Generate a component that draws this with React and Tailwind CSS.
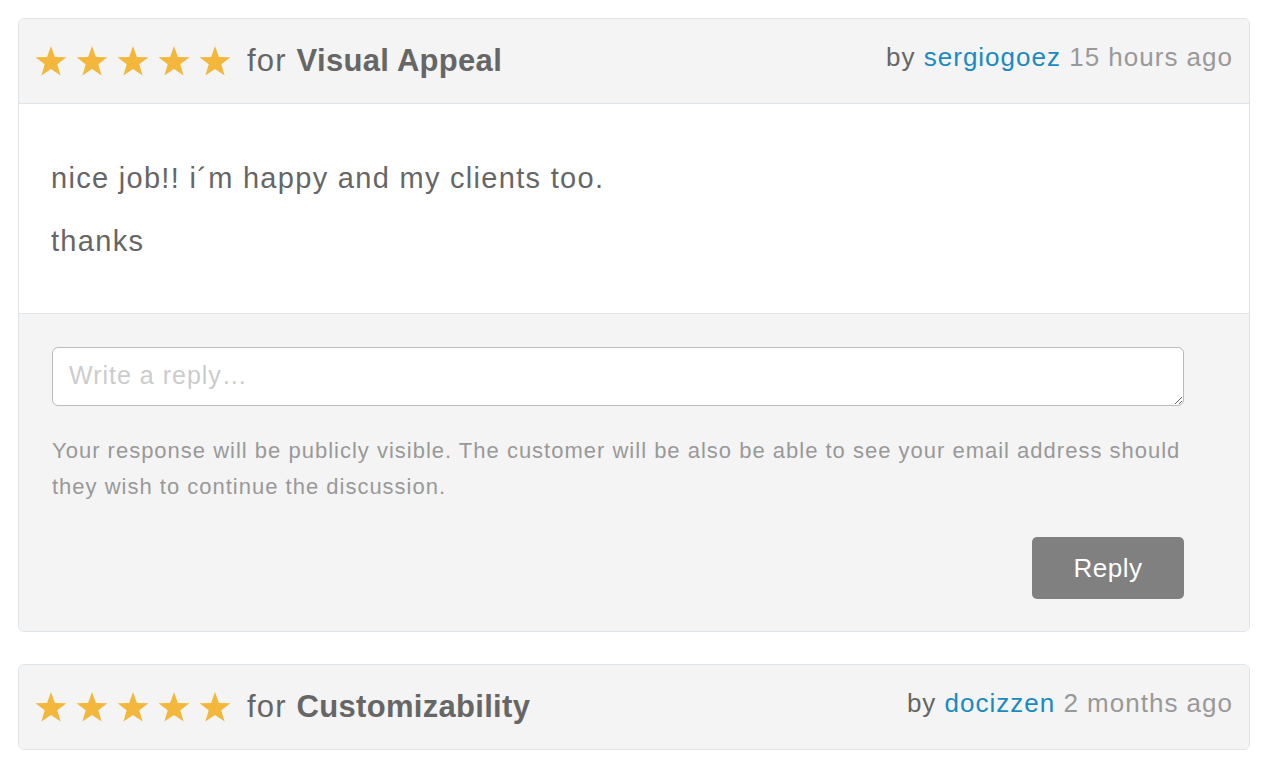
import React from 'react';

function Star() {
  return (
    <svg width="32" height="31" viewBox="0 0 32 31" className="shrink-0">
      <polygon
        points="16,0 19.9,10.9 31.5,11.2 22.3,18.3 25.6,29.5 16,23 6.4,29.5 9.7,18.3 0.5,11.2 12.1,10.9"
        fill="#f2b73b"
      />
    </svg>
  );
}

function ReviewHeader({ topic, author, when }) {
  return (
    <div className="flex items-center justify-between h-[84px] px-[16px] bg-[#f4f4f4]">
      <div className="flex items-center">
        <div className="flex items-center gap-[9px]">
          {[0, 1, 2, 3, 4].map((i) => <Star key={i} />)}
        </div>
        <span className="ml-[16px] text-[31px] text-[#666]">
          <span className="tracking-[1.2px]">for </span>
          <b className="font-bold tracking-[0.3px]">{topic}</b>
        </span>
      </div>
      <span className="mb-[8px] text-[26px] text-[#666] tracking-[1px]">
        by <a className="text-[#1a8bc0]">{author}</a> <span className="text-[#999]">{when}</span>
      </span>
    </div>
  );
}

export default function App() {
  return (
    <div className="min-h-screen bg-white pt-[18px] pl-[18px] pr-[14px]" style={{ fontFamily: '"Liberation Sans", Arial, sans-serif' }}>
      {/* first review */}
      <div className="border border-[#dfe4e8] rounded-[6px] overflow-hidden">
        <ReviewHeader topic="Visual Appeal" author="sergiogoez" when="15 hours ago" />
        <div className="border-t border-[#dfe4e8] bg-white px-[32px] pt-[53px] pb-[51px] text-[29px] tracking-[1.3px] text-[#666] leading-[42px]">
          <p className="mb-[21px]">nice job!! i´m happy and my clients too.</p>
          <p>thanks</p>
        </div>
        <div className="border-t border-[#dfe4e8] bg-[#f4f4f4] pl-[33px] pr-[65px] pt-[33px] pb-[32px]">
          <textarea
            placeholder="Write a reply…"
            className="block w-full h-[59px] border border-[#bbb] rounded-[6px] bg-white px-[16px] py-[9px] text-[25px] tracking-[1px] text-[#666] placeholder:text-[#ccc] outline-none"
          />
          <p className="mt-[27px] text-[22px] tracking-[1px] leading-[36px] text-[#999]">
            Your response will be publicly visible. The customer will be also be able to see your email address should they wish to continue the discussion.
          </p>
          <div className="flex justify-end mt-[32px]">
            <button className="w-[152px] h-[62px] rounded-[5px] bg-[#808080] text-white text-[26px] tracking-[0.5px]">
              Reply
            </button>
          </div>
        </div>
      </div>

      {/* second review */}
      <div className="mt-[32px] border border-[#dfe4e8] rounded-[6px] overflow-hidden">
        <ReviewHeader topic="Customizability" author="docizzen" when="2 months ago" />
      </div>
    </div>
  );
}
